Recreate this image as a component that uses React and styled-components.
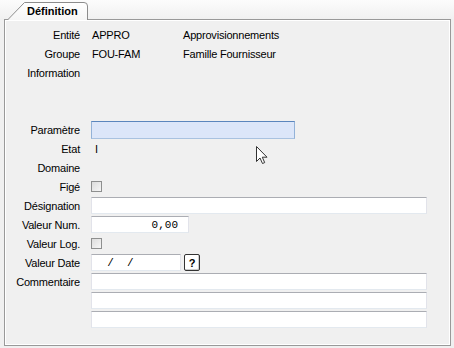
import React from "react"
import styled, { createGlobalStyle } from "styled-components"

const GlobalStyle = createGlobalStyle`
  html, body {
    margin: 0;
    padding: 0;
    background: #f0f0f0;
    font-family: "Liberation Sans", Arial, sans-serif;
    font-size: 11px;
    color: #000;
  }
`

const Page = styled.div`
  width: 454px;
  height: 348px;
  padding: 0 3px 2px 4px;
  box-sizing: border-box;
  display: flex;
  flex-direction: column;
  background: linear-gradient(#fcfcfc 0px, #f0f0f0 20px, #f0f0f0 100%);
`

const TabBar = styled.div`
  height: 19px;
  display: flex;
  align-items: flex-end;
  padding-left: 3px;
  position: relative;
  z-index: 2;
`

const Tab = styled.div`
  position: relative;
  width: 81px;
  height: 18px;
  margin-bottom: -1px;
  box-sizing: border-box;
  padding-left: 20px;
  display: flex;
  align-items: center;
  font-weight: bold;
  font-size: 11px;

  svg {
    position: absolute;
    left: 0;
    top: 0;
  }
  span {
    position: relative;
  }
`

const Panel = styled.div`
  position: relative;
  flex: 1;
  border: 1px solid #999;
  box-shadow: inset 1px 1px 0 #fff, inset -1px -1px 0 #fff;
  background: #f0f0f0;
  padding-top: 5px;
`

const Form = styled.div`
  display: grid;
  grid-template-columns: 75px 1fr;
  grid-auto-rows: 19px;
  column-gap: 11px;
  align-items: center;
  letter-spacing: -0.2px;
`

const Label = styled.div`
  text-align: right;
  white-space: nowrap;
`

const Value = styled.div`
  display: flex;
  align-items: center;
  padding-left: ${(p) => p.$indent || 0}px;
  white-space: nowrap;
`

const Code = styled.span`
  width: 91px;
`

const Gap = styled.div`
  grid-column: 1 / -1;
  grid-row: span 2;
`

const Field = styled.div`
  width: ${(p) => p.$w}px;
  height: ${(p) => p.$h || 17}px;
  box-sizing: border-box;
  border: 1px solid;
  border-color: ${(p) => (p.$focus ? "#5b86bd #93b2d8 #a9c2e0 #93b2d8" : "#abadb3 #e2e3ea #e3e9ef #e2e3ea")};
  background: ${(p) => (p.$focus ? "#dce6f9" : "#fff")};
  font-family: "Liberation Mono", "Courier New", monospace;
  font-size: 11px;
  letter-spacing: 0;
  display: flex;
  align-items: center;
  justify-content: ${(p) => (p.$right ? "flex-end" : "flex-start")};
  padding: 0 ${(p) => (p.$right ? 10 : 2)}px;
  white-space: pre;
`

const Check = styled.div`
  width: 11px;
  height: 11px;
  box-sizing: border-box;
  border: 1px solid #8e8f8f;
  background: linear-gradient(135deg, #dcdcdc, #f6f6f6);
`

const Row = styled.div`
  display: flex;
  align-items: center;
  gap: 3px;
`

const Help = styled.div`
  width: 16px;
  height: 17px;
  box-sizing: border-box;
  border: 1px solid #333;
  border-radius: 2px;
  background: #fff;
  box-shadow: inset -1px -1px 0 #ccc;
  font-weight: bold;
  font-size: 11px;
  display: flex;
  align-items: center;
  justify-content: center;
`

const Cursor = styled.svg`
  position: absolute;
  left: 251px;
  top: 126px;
`

export default function App() {
  return (
    <>
      <GlobalStyle />
      <Page>
        <TabBar>
          <Tab>
            <svg width="81" height="18" viewBox="0 0 81 18">
              <defs>
                <linearGradient id="tabg" x1="0" y1="0" x2="0" y2="1">
                  <stop offset="0" stopColor="#ffffff" />
                  <stop offset="1" stopColor="#f6f6f6" />
                </linearGradient>
              </defs>
              <path d="M0.5,18 L17.5,0.5 L77,0.5 Q80.5,0.5 80.5,4 L80.5,18 Z" fill="url(#tabg)" />
              <path d="M0.5,18 L17.5,0.5 L77,0.5 Q80.5,0.5 80.5,4 L80.5,18" fill="none" stroke="#8c8c8c" />
            </svg>
            <span>Définition</span>
          </Tab>
        </TabBar>
        <Panel>
          <Form>
            <Label>Entité</Label>
            <Value $indent={1}><Code>APPRO</Code>Approvisionnements</Value>
            <Label>Groupe</Label>
            <Value $indent={1}><Code>FOU-FAM</Code>Famille Fournisseur</Value>
            <Label>Information</Label>
            <Value />
            <Gap />
            <Label>Paramètre</Label>
            <Value><Field $w={204} $h={18} $focus /></Value>
            <Label>Etat</Label>
            <Value $indent={4}>I</Value>
            <Label>Domaine</Label>
            <Value />
            <Label>Figé</Label>
            <Value><Check /></Value>
            <Label>Désignation</Label>
            <Value><Field $w={336} /></Value>
            <Label>Valeur Num.</Label>
            <Value><Field $w={98} $right>0,00</Field></Value>
            <Label>Valeur Log.</Label>
            <Value><Check /></Value>
            <Label>Valeur Date</Label>
            <Value>
              <Row>
                <Field $w={90}>{"  /  /"}</Field>
                <Help>?</Help>
              </Row>
            </Value>
            <Label>Commentaire</Label>
            <Value><Field $w={336} /></Value>
            <Label />
            <Value><Field $w={336} /></Value>
            <Label />
            <Value><Field $w={336} /></Value>
          </Form>
          <Cursor width="13" height="19" viewBox="0 0 13 19">
            <path d="M0.5,0.5 L0.5,15.5 L4,12 L6.5,17.5 L8.7,16.6 L6.3,11.2 L11,11.2 Z" fill="#fff" stroke="#333" strokeLinejoin="round" />
          </Cursor>
        </Panel>
      </Page>
    </>
  )
}
